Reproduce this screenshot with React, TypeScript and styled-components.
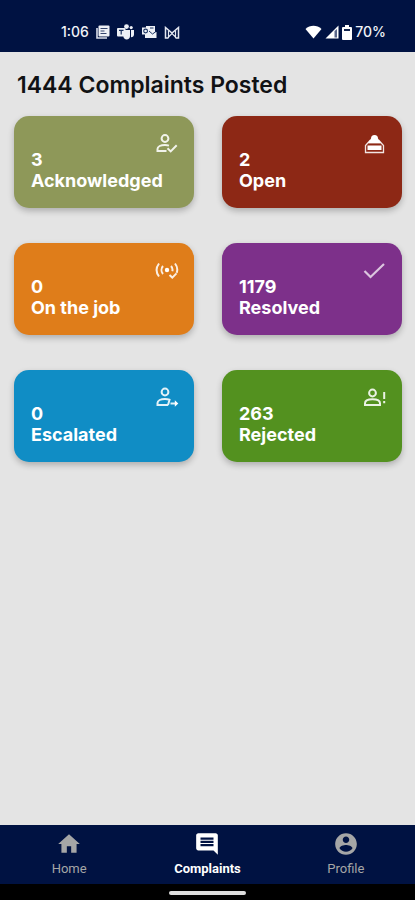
import React from "react";
import styled, { createGlobalStyle } from "styled-components";

const GlobalStyle = createGlobalStyle`
  *, *::before, *::after { box-sizing: border-box; }
  body { margin: 0; background: #e4e4e4; }
`;

const Screen = styled.div`
  display: flex;
  flex-direction: column;
  min-height: 100vh;
  background: #e4e4e4;
  color: #111214;
  font-family: Inter, "Liberation Sans", sans-serif;
`;

const StatusBar = styled.header`
  display: flex;
  align-items: flex-end;
  justify-content: space-between;
  height: 52px;
  padding: 0 29px 10px 61px;
  background: #001242;
  color: #f1f3f8;
  font-size: 14px;
  font-weight: 500;
  line-height: 20px;
`;

const StatusGroup = styled.div<{ $gap: number }>`
  display: flex;
  align-items: center;
  gap: ${(p) => p.$gap}px;
`;

const Content = styled.main`
  flex: 1;
  padding: 20px 13px 24px 14px;
`;

const Heading = styled.h1`
  margin: 0 0 17px;
  padding-left: 3px;
  font-size: 23px;
  font-weight: 600;
  line-height: 27px;
`;

const CardGrid = styled.div`
  display: grid;
  grid-template-columns: 1fr 1fr;
  gap: 35px 28px;
`;

const Card = styled.button<{ $color: string }>`
  display: flex;
  flex-direction: column;
  justify-content: flex-start;
  height: 92px;
  padding: 15px 15px 16px 17px;
  border: 0;
  border-radius: 15px;
  background: ${(p) => p.$color};
  box-shadow: 0 3px 6px rgba(0, 0, 0, 0.24);
  color: #fff;
  font: inherit;
  font-size: 18px;
  font-weight: 700;
  line-height: 21px;
  text-align: left;
  cursor: pointer;
`;

const CardTop = styled.span`
  display: flex;
  justify-content: space-between;
  height: 39px;
`;

const Count = styled.span`
  align-self: flex-end;
`;

const TabBar = styled.nav`
  display: grid;
  grid-template-columns: repeat(3, 1fr);
  height: 59px;
  background: #001242;
`;

const Tab = styled.a<{ $active?: boolean }>`
  display: flex;
  flex-direction: column;
  align-items: center;
  gap: 4px;
  padding-top: 6px;
  color: ${(p) => (p.$active ? "#fff" : "#a5a6a6")};
  font-family: Roboto, sans-serif;
  font-size: 13px;
  font-weight: ${(p) => (p.$active ? 700 : 400)};
  line-height: 16px;
  text-decoration: none;
`;

const GestureArea = styled.footer`
  display: flex;
  justify-content: center;
  height: 16px;
  padding-top: 7px;
  background: #000;
`;

const GestureHandle = styled.div`
  width: 77px;
  height: 4px;
  border-radius: 2px;
  background: #dedede;
`;

const LineIcon = ({ children }: { children: React.ReactNode }) => (
  <svg width="24" height="24" viewBox="0 0 24 24" fill="none" stroke="#fff" strokeOpacity="0.88" strokeWidth="2" aria-hidden="true">
    {children}
  </svg>
);

const PersonCheck = () => (
  <LineIcon>
    <circle cx="10" cy="7.5" r="3.4" />
    <path d="M11.5 20H2.5v-2c0-2.4 3.2-4 7.5-4 1.6 0 2.8.2 4 .6M12.5 17.2l3.2 3.2 6-6.2" />
  </LineIcon>
);

const Inbox = () => (
  <LineIcon>
    <path d="M7.500 9 2.500 14.500v7h18v-7L15.500 9" strokeWidth="1.300" />
    <path d="M8 7.500a3.500 3.500 0 0 1 7 0l3 4.500H5zM4.500 14.500h14v4.500h-14z" fill="#fff" stroke="none" />
    <path d="M5.500 11.800h12" strokeWidth="1.300" />
  </LineIcon>
);

const Signal = () => (
  <LineIcon>
    <circle cx="12" cy="12" r="2.2" fill="#fff" stroke="none" />
    <path d="M4 5.500c-3 4-3 9 0 13M8 8c-2 2.300-2 5.700 0 8M16 8c1.400 1.500 1.800 3.500 1.300 5.300M20 5.500c2.200 2.800 2.800 6.200 1.700 9.400M14.500 17l2.800 2.600 4.200-4.200" strokeWidth="2" />
  </LineIcon>
);

const Check = () => (
  <LineIcon>
    <path d="m1.500 13 6 6L21 6" strokeOpacity="0.72" strokeWidth="2.200" />
  </LineIcon>
);

const PersonArrow = () => (
  <LineIcon>
    <circle cx="10" cy="7" r="3.4" />
    <path d="M13 20H2.5v-2c0-2.4 3.2-4 7.5-4 1.7 0 3.2.3 4.5.8L13 20M15.5 18.5h6" />
    <path d="m19.8 15.2 3.5 3.3-3.5 3.3z" fill="#fff" stroke="none" />
  </LineIcon>
);

const PersonAlert = () => (
  <LineIcon>
    <circle cx="9.500" cy="8" r="3.4" />
    <path d="M2 20v-1.8c0-2.4 3.2-3.9 7.5-3.9s7.5 1.5 7.5 3.9V20zM21.200 7v7M21.200 16v2.2" />
  </LineIcon>
);

const cards = [
  { count: 3, label: "Acknowledged", color: "#8e9859", Icon: PersonCheck },
  { count: 2, label: "Open", color: "#8d2815", Icon: Inbox },
  { count: 0, label: "On the job", color: "#df7d1a", Icon: Signal },
  { count: 1179, label: "Resolved", color: "#7d308a", Icon: Check },
  { count: 0, label: "Escalated", color: "#108dc5", Icon: PersonArrow },
  { count: 263, label: "Rejected", color: "#53911f", Icon: PersonAlert },
];

const NewsIcon = () => (
  <svg width="14" height="14" viewBox="0 0 14 14" aria-hidden="true">
    <path d="M1 3v10h10" fill="none" stroke="#d9deea" strokeWidth="1.6" />
    <rect x="2.5" y="0.5" width="11" height="11" rx="1" fill="#edf0f6" />
    <path d="M4.5 3.5h7M4.5 6h4M4.5 8.5h6" stroke="#34446c" strokeWidth="1" />
  </svg>
);

const TeamsIcon = () => (
  <svg width="17" height="16" viewBox="0 0 17 16" aria-hidden="true" fill="#edf0f6">
    <circle cx="9.5" cy="2.6" r="2.4" />
    <circle cx="14.2" cy="3.6" r="1.6" />
    <path d="M7 6h6v6c0 2-1.4 3.5-3.3 3.5S6.4 14 6.4 12.5zM14 6h3v4.500c0 1.600-1.100 2.800-3 2.800z" />
    <rect y="4" width="8.5" height="8.5" rx="1" />
    <path d="M2 6.3h4.5M4.2 6.3v4.2" stroke="#19315f" strokeWidth="1.2" />
  </svg>
);

const OutlookIcon = () => (
  <svg width="16" height="14" viewBox="0 0 16 14" aria-hidden="true">
    <path d="M5 1h9v6h1.5v6H4V9.5H1v-7h4z" fill="#edf0f6" />
    <circle cx="4.6" cy="6" r="1.9" fill="none" stroke="#19315f" strokeWidth="1.1" />
    <path d="m8 6 3.5 3L15 6.5M9 3h3.5" fill="none" stroke="#19315f" strokeWidth="1" />
  </svg>
);

const MailIcon = () => (
  <svg width="16" height="13" viewBox="0 0 16 13" aria-hidden="true" fill="none" stroke="#e3e7f0">
    <path d="M4.500 12H1.500V1.500L8 7l6.500-5.500V12h-3" strokeWidth="1.500" />
    <path d="M4.500 12V4.500M11.500 12V4.500M4.500 11 8 7.500l3.500 3.500" strokeWidth="1.200" />
  </svg>
);

const WifiIcon = () => (
  <svg width="17" height="14" viewBox="0 0 17 14" aria-hidden="true">
    <path d="M.5 4C5-.3 12-.3 16.500 4L8.500 13.500z" fill="#fff" />
  </svg>
);

const CellIcon = () => (
  <svg width="14" height="14" viewBox="0 0 14 14" aria-hidden="true">
    <path d="M.5 13.500 13.500.500v13z" fill="#fff" />
    <path d="M9.500 6v6.500h2.500V4z" fill="#5a678a" />
  </svg>
);

const BatteryIcon = () => (
  <svg width="10" height="15" viewBox="0 0 10 15" aria-hidden="true">
    <path d="M3 0h4v2h2q1 0 1 1v11q0 1-1 1H1q-1 0-1-1V3q0-1 1-1h2z" fill="#fff" />
    <path d="M2 4h6v2H2z" fill="#14264f" />
  </svg>
);

const TabIcon = ({ d }: { d: string }) => (
  <svg width="26" height="26" viewBox="0 0 24 24" fill="currentColor" aria-hidden="true">
    <path d={d} />
  </svg>
);

const tabs = [
  { label: "Home", d: "M10 20v-6h4v6h5v-8h3L12 3 2 12h3v8z" },
  {
    label: "Complaints",
    active: true,
    d: "M21.990 4c0-1.100-.890-2-1.990-2H4c-1.100 0-2 .900-2 2v12c0 1.100.900 2 2 2h14l4 4-.010-18zM18 14H6v-2h12v2zm0-3H6V9h12v2zm0-3H6V6h12v2z",
  },
  {
    label: "Profile",
    d: "M12 2C6.480 2 2 6.480 2 12s4.480 10 10 10 10-4.480 10-10S17.520 2 12 2zm0 3c1.660 0 3 1.340 3 3s-1.340 3-3 3-3-1.340-3-3 1.340-3 3-3zm0 14.200c-2.500 0-4.710-1.280-6-3.220.030-1.990 4-3.080 6-3.080 1.990 0 5.970 1.090 6 3.080-1.290 1.940-3.500 3.220-6 3.220z",
  },
];

export default function App() {
  return (
    <Screen>
      <GlobalStyle />
      <StatusBar>
        <StatusGroup $gap={7}>
          <span>1:06</span>
          <NewsIcon />
          <TeamsIcon />
          <OutlookIcon />
          <MailIcon />
        </StatusGroup>
        <StatusGroup $gap={3}>
          <WifiIcon />
          <CellIcon />
          <BatteryIcon />
          <span>70%</span>
        </StatusGroup>
      </StatusBar>
      <Content>
        <Heading>1444 Complaints Posted</Heading>
        <CardGrid>
          {cards.map(({ count, label, color, Icon }) => (
            <Card key={label} type="button" $color={color}>
              <CardTop>
                <Count>{count}</Count>
                <Icon />
              </CardTop>
              <span>{label}</span>
            </Card>
          ))}
        </CardGrid>
      </Content>
      <TabBar aria-label="Main">
        {tabs.map(({ label, d, active }) => (
          <Tab key={label} href={`#${label.toLowerCase()}`} $active={active} aria-current={active ? "page" : undefined}>
            <TabIcon d={d} />
            {label}
          </Tab>
        ))}
      </TabBar>
      <GestureArea>
        <GestureHandle />
      </GestureArea>
    </Screen>
  );
}
